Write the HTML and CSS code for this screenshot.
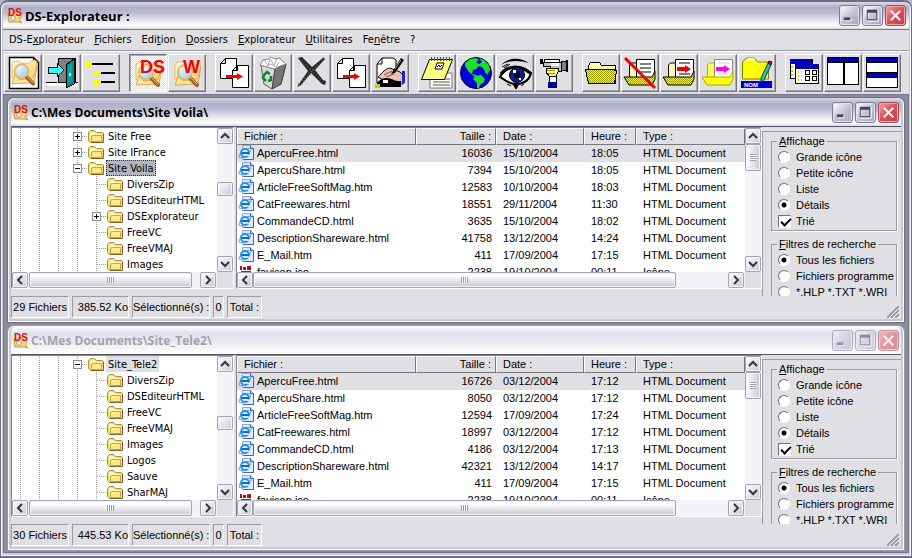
FILE: index.html
```html
<!DOCTYPE html>
<html lang="fr">
<head>
<meta charset="utf-8">
<title>DS-Explorateur</title>
<link rel="stylesheet" href="styles.css">
</head>
<body>
<svg class="defs" aria-hidden="true">
  <defs>
    <linearGradient id="gold" x1="0" y1="0" x2="1" y2="1"><stop offset="0" stop-color="#fffbd0"/><stop offset="1" stop-color="#f4cd62"/></linearGradient>
    <linearGradient id="lens" x1="0" y1="0" x2="1" y2="1"><stop offset="0" stop-color="#fff"/><stop offset="1" stop-color="#8ccdf2"/></linearGradient>
    <pattern id="dither" width="2" height="2" patternUnits="userSpaceOnUse"><rect width="2" height="2" fill="#f0f040"/><rect width="1" height="1" fill="#a0a000"/><rect x="1" y="1" width="1" height="1" fill="#a0a000"/></pattern>
    <symbol id="search" viewBox="0 0 32 32">
      <path d="M4 8l2-3h6l2 2h7l5-3 4 1-3 19-19 2-4-4z" fill="url(#gold)" stroke="#e8bd62"/>
      <path d="M4 28l3-9 5 5 14-2 4-12-3 17z" fill="#fae5a0" stroke="#dca94a"/>
      <path d="M19 21l7 7" stroke="#a8602c" stroke-width="4" stroke-linecap="round"/>
      <path d="M19 20l7 7" stroke="#f0bd80" stroke-width="1"/>
      <circle cx="14" cy="15" r="6.500" fill="url(#lens)" stroke="#e0c9a8" stroke-width="2"/>
      <circle cx="14" cy="15" r="7.500" fill="none" stroke="#c89a5c" stroke-width=".7"/>
    </symbol>
    <symbol id="ds-small" viewBox="0 0 16 16">
      <path d="M1 5h4l1-1h7v9l2 2-3-1H2z" fill="#f6dc7c" stroke="#c9973a"/>
      <circle cx="6" cy="10" r="2.500" fill="#d8eefa" stroke="#c0a070"/>
      <text x="1" y="8" class="ds-mini">DS</text>
    </symbol>
    <symbol id="folder" viewBox="0 0 16 16">
      <path d="M.5 12.500v-8l2-2h4l2 2h6l1 1v8l-1 1h-12z" fill="#f7dd6c" stroke="#b5902f"/>
      <path d="M2 6l1-2h3l2 2h5v1H3l-1 4z" fill="#fff8c0"/>
      <path d="M3.500 13.500v-5l2-1h8v6z" fill="#ffe98a" stroke="#cfa338"/>
      <path d="M3 14.500h12.500V6" fill="none" stroke="#7d6320"/>
    </symbol>
    <symbol id="ie" viewBox="0 0 16 16">
      <path d="M4.500.5h8l3 3v11h-11z" fill="#dfeafc" stroke="#8fa6e0"/>
      <path d="M12.500.5v3h3v11h-10" fill="none" stroke="#4560b8"/>
      <ellipse cx="7" cy="8" rx="7" ry="2.500" transform="rotate(-35 7 8)" fill="none" stroke="#56a8e8"/>
      <circle cx="7" cy="8" r="4" fill="#dff3ff" stroke="#2b8fe0" stroke-width="2"/>
      <path d="M4 8h7" stroke="#1668bd" stroke-width="2"/>
      <path d="M9 9.500h4V11H9z" fill="#dfeafc"/>
    </symbol>
    <symbol id="ico-file" viewBox="0 0 16 16">
      <path d="M2 2h2v4H2zM5 3h3v3H5zM9 2h4v4H9zM3 7h10v2H3z" fill="#c01818"/>
      <path d="M3 4h1v2H3zM6 4h1v1H6zM11 3h1v3h-1z" fill="#600"/>
    </symbol>
    <symbol id="copy" viewBox="0 0 32 32">
      <path d="M2.500 6.500l5-5h11v20h-16zM2.500 6.500h5v-5" fill="#fff" stroke="#000"/>
      <path d="M14.500 13.500l5-5h11v22h-16zM14.500 13.500h5v-5" fill="#fff" stroke="#000"/>
      <path d="M8 18h11v-2l6 3.500-6 3.500v-2H8z" fill="#f00"/>
    </symbol>
    <symbol id="grip" viewBox="0 0 12 12">
      <path d="M0 12L12 0M4 12l8-8M8 12l4-4" stroke="#9a9aa4" stroke-width="2"/>
      <path d="M2 12L12 2M6 12l6-6" stroke="#fff"/>
    </symbol>
    <symbol id="up" viewBox="0 0 10 10"><path d="M1 7l4-4 4 4" fill="none" stroke="#333344" stroke-width="2"/></symbol>
    <symbol id="down" viewBox="0 0 10 10"><path d="M1 3l4 4 4-4" fill="none" stroke="#333344" stroke-width="2"/></symbol>
    <symbol id="left" viewBox="0 0 10 10"><path d="M7 1L3 5l4 4" fill="none" stroke="#333344" stroke-width="2"/></symbol>
    <symbol id="right" viewBox="0 0 10 10"><path d="M3 1l4 4-4 4" fill="none" stroke="#333344" stroke-width="2"/></symbol>
    <symbol id="min" viewBox="0 0 20 20"><path d="M5 13h7v3H5z" fill="#fff"/><path d="M4 12h7v3H4z" fill="#44465f"/></symbol>
    <symbol id="max" viewBox="0 0 20 20"><path d="M5 5h11v11H5z" fill="none" stroke="#fff"/><path d="M4 4h11v11H4zM5 7v7h9V7z" fill="#44465f" fill-rule="evenodd"/></symbol>
    <symbol id="close" viewBox="0 0 20 20"><path d="M5 5l10 10M15 5L5 15" stroke="#fff" stroke-width="2"/></symbol>
  </defs>
</svg>

<div class="app">
  <header class="titlebar">
    <svg class="ic16"><use href="#ds-small"/></svg>
    <h1>DS-Explorateur :</h1>
    <button class="cap" aria-label="Réduire"><svg><use href="#min"/></svg></button>
    <button class="cap" aria-label="Agrandir"><svg><use href="#max"/></svg></button>
    <button class="cap close" aria-label="Fermer"><svg><use href="#close"/></svg></button>
  </header>

  <nav class="menu">
    <button>DS-E<u>x</u>plorateur</button>
    <button><u>F</u>ichiers</button>
    <button>Edi<u>t</u>ion</button>
    <button><u>D</u>ossiers</button>
    <button><u>E</u>xplorateur</button>
    <button><u>U</u>tilitaires</button>
    <button>Fe<u>n</u>être</button>
    <button>?</button>
  </nav>

  <div class="toolbar">
    <div class="group">
      <button aria-label="Aperçu"><svg viewBox="0 0 32 32"><path d="M2.500.5h24l5 5v26h-29z" fill="#fff" stroke="#000" stroke-width="1.500"/><path d="M26.500.5v5h5" fill="none" stroke="#000"/><use href="#search" x="1" y="-1" width="31" height="32"/></svg></button>
      <button aria-label="Quitter"><svg viewBox="0 0 32 32" shape-rendering="crispEdges"><path d="M0 25h32v4H0z" fill="#fff"/><path d="M0 25h11v1H0zM28 25h4v1h-4z" fill="#000"/><path d="M12 1h17v24H12z" fill="#808080" stroke="#000"/><path d="M20 8l8-6v25l-8 4z" fill="#008c8c" stroke="#000"/><path d="M22 9l4-3v18l-4 2z" fill="#00a8a8"/><path d="M23 16h2v3h-2z" fill="#ff0"/><path d="M2 10h9V6l7 7-7 7v-4H2z" fill="#3ff" stroke="#000"/></svg></button>
      <button aria-label="Arborescence"><svg viewBox="0 0 32 32" shape-rendering="crispEdges"><path d="M1 5h5v5H1zM9 14h6v5H9zM9 23h6v5H9z" fill="#ff0"/><path d="M7 6h21v2H7zM16 15h14v2H16zM16 24h14v2H16z" fill="#000"/></svg></button>
    </div>
    <div class="group">
      <button class="pressed" aria-label="DS"><svg viewBox="0 0 32 32"><use href="#search" width="32" height="32"/><text x="8" y="16" class="ds-big">DS</text></svg></button>
      <button aria-label="Windows"><svg viewBox="0 0 32 32"><use href="#search" width="32" height="32"/><text x="12" y="16" class="ds-big">W</text></svg></button>
    </div>
    <div class="group">
      <button aria-label="Copier"><svg><use href="#copy"/></svg></button>
      <button aria-label="Corbeille"><svg viewBox="0 0 32 32"><path d="M4 8l14 4 11-5-5 20-9 5-8-5z" fill="#a8a8a8" stroke="#555"/><path d="M4 8l14 4-3 20-8-5z" fill="#d9d9d9" stroke="#777"/><path d="M18 12l11-5-5 20-9 5z" fill="#777" stroke="#444"/><path d="M3 8l3-5 5-1 3-2 4 2 5-1 2 3 4 3-8 3-3 2-8-2z" fill="#fff" stroke="#888"/><path d="M7 3l4 5 2-6 4 6 3-6M10 9l4-2 5 3 3-5" fill="none" stroke="#aaa"/><path d="M7 18l3-3 3 2M14 19v4l-3 1M9 24l-3-3 1-3" fill="none" stroke="#078a28" stroke-width="2.500"/></svg></button>
      <button aria-label="Supprimer"><svg viewBox="0 0 32 32"><path d="M2 1l4-1 10 10L27 1l2 1-10 11 8 10 3 1-1 4-3-1-11-11L5 28l-4 2 11-16z" fill="#222"/><path d="M3 1l26 26M28 1L2 29" stroke="#555" stroke-dasharray="1 2" stroke-width="3"/></svg></button>
      <button aria-label="Déplacer"><svg><use href="#copy"/></svg></button>
      <button aria-label="Renommer"><svg viewBox="0 0 32 32"><path d="M3 7l5-6h11l3 2v20L3 26z" fill="#fff" stroke="#000"/><path d="M3 7h5V1" fill="none" stroke="#000"/><path d="M4 20c4-4 8-9 12-9l10 4 3 3v9l-14-1z" fill="#eebfb5" stroke="#000"/><path d="M27 1l3 2-9 13-4 1z" fill="#000"/><path d="M27 3l-6 9" stroke="#b8a850"/><path d="M10 18l8-4M12 20l8-3" stroke="#805050"/><path d="M2 29c2-6 6-8 11-8 5 0 8 4 14 3v6H4z" fill="#000"/><path d="M9 23h5v3H9z" fill="#fff"/><path d="M28 14h3v12h-3z" fill="#22c"/><path d="M1 27h5v4H1z" fill="#cc0"/></svg></button>
    </div>
    <div class="group">
      <button aria-label="Bloc-notes"><svg viewBox="0 0 32 32"><path d="M9 16h22v15H9z" fill="#fff" stroke="#777"/><path d="M12 22h17M12 25h17M12 28h17" stroke="#555"/><path d="M8.500 2.500h23l-8 20H.5z" fill="#ffff80" stroke="#000"/><path d="M16 6h7l-2 6h-7z" fill="#fff" stroke="#000"/><path d="M16 10l2-2 1 2 2-2" stroke="#000" fill="none"/><path d="M10 2h21" stroke="#555" stroke-width="4" stroke-dasharray="1 2"/></svg></button>
      <button aria-label="Internet"><svg viewBox="0 0 32 32"><circle cx="16" cy="16" r="15.500" fill="#0000d8" stroke="#000"/><path d="M5 6l5-4 6-1 3 2-3 2 4 3-4 4-3 1-1 4 4 1 2 3-3-1-6-5-4-6zM19 1l5 2 5 5 1 5-3 5-4-7-5-3 4-3zM15 19l6-1 4 4-1 3-4 3-1 3h-2v-5l-4-4z" fill="#1be02a"/></svg></button>
      <button aria-label="Visualiser"><svg viewBox="0 0 32 32"><path d="M2 8C8 1 20-1 30 6 20 3 10 3 2 8z" fill="#000"/><path d="M1 20C5 11 20 6 30 15l2 1c-2 8-8 11-15 11C9 27 5 22 1 20z" fill="#fff" stroke="#000" stroke-width="2"/><path d="M2 17C8 9 20 7 31 16" fill="none" stroke="#000" stroke-width="3"/><circle cx="18" cy="18" r="7.500" fill="#0d1a90" stroke="#000"/><circle cx="18" cy="18" r="3" fill="#000"/><path d="M14 13h3v3h-3zM20 21h2v2h-2z" fill="#fff"/><path d="M3 10l6-3M5 11l6-4M14 27l3 5 3-5zM8 27l4 2M25 27l-3 2" stroke="#000"/></svg></button>
      <button aria-label="Vidéo"><svg viewBox="0 0 32 32" shape-rendering="crispEdges"><path d="M5 5h18v9H12V9H5z" fill="#c0c0c0" stroke="#000"/><path d="M6 2h15v3H6z" fill="#fff" stroke="#000"/><path d="M23 5l5-1v10l-5-1z" fill="#808080" stroke="#000"/><path d="M2 2h3v5H2zM28 3h2v12h-2z" fill="#000"/><path d="M13 6h8v3h-8z" fill="#fff"/><path d="M8 11h12v4l-2 4h-7l-3-4z" fill="#ffff80" stroke="#000"/><path d="M9 13h8M10 16h7" stroke="#a89000"/><path d="M11 19h7v6h-7z" fill="#fff" stroke="#000"/><path d="M10 25h9v6h-9z" fill="#000090"/></svg></button>
    </div>
    <div class="group">
      <button aria-label="Ouvrir dossier"><svg viewBox="0 0 32 32" shape-rendering="crispEdges"><path d="M3.500 26.500v-18l2-3h9l2 3h14v18z" fill="#ffffa8" stroke="#000"/><path d="M.5 12.500h27l4 1-2 13h-26z" fill="url(#dither)" stroke="#000"/></svg></button>
      <button aria-label="Supprimer dossier"><svg viewBox="0 0 32 32"><path d="M5.500 20V8l2-2h7v14" fill="#ffffb0" stroke="#000"/><path d="M12.500 2.500h18v19h-18z" fill="#fff" stroke="#000"/><path d="M16 7h11M16 11h11M16 15h11" stroke="#000"/><path d="M0 20h28l3-6v8l-3 6H5z" fill="url(#dither)" stroke="#000"/><path d="M1 1l30 30" stroke="#f00000" stroke-width="3"/></svg></button>
      <button aria-label="Copier dossier"><svg viewBox="0 0 32 32"><path d="M5.500 20V8l2-2h7v14" fill="#ffffb0" stroke="#000"/><path d="M12.500 2.500h18v19h-18z" fill="#fff" stroke="#000"/><path d="M16 6h11M16 17h11" stroke="#000"/><path d="M14 10h8V8l6 4-6 4v-2h-8z" fill="#f00000"/><path d="M0 20h28l3-6v8l-3 6H5z" fill="url(#dither)" stroke="#000"/></svg></button>
      <button aria-label="Déplacer dossier"><svg viewBox="0 0 32 32"><path d="M5.500 20V8l2-2h7v14" fill="#ffff50" stroke="#b0b000"/><path d="M12.500 2.500h18v19h-18z" fill="#fff" stroke="#888"/><path d="M16 6h11M16 17h11" stroke="#ccc"/><path d="M14 10h8V8l6 4-6 4v-2h-8z" fill="#f0f"/><path d="M0 20h28l3-6v8l-3 6H5z" fill="#ff0" stroke="#a8a800"/></svg></button>
      <button aria-label="Renommer dossier"><svg viewBox="0 0 32 32"><path d="M1.500 22V5l4-4h8l3 4h11v17z" fill="#ff0" stroke="#808000"/><path d="M5 4l2-3h6l2 3z" fill="#ffffa0"/><path d="M0 24h31v7H0z" fill="#0000c8"/><text x="3" y="30" class="nom">NOM</text><path d="M27 6l3 2-7 15-3 2v-4z" fill="#38b8b0" stroke="#004848"/><path d="M27 6l1-2 3 1-1 3z" fill="#b01818" stroke="#500"/></svg></button>
    </div>
    <div class="group">
      <button aria-label="Cascade"><svg viewBox="0 0 32 32" shape-rendering="crispEdges"><path d="M2 2h22v19H2z" fill="#fff" stroke="#000"/><path d="M2 2h22v5H2z" fill="#0000b8"/><path d="M7 7h23v19H7z" fill="#fff" stroke="#000"/><path d="M7 7h23v5H7z" fill="#0000b8"/><path d="M4 9v10" stroke="#cc0" stroke-dasharray="2 2" stroke-width="2"/><path d="M10 14v10M13 14v10" stroke="#cc0" stroke-dasharray="2 2"/><path d="M17 13h4v4h-4zM24 13h4v4h-4zM17 19h4v4h-4zM24 19h4v4h-4z" fill="none" stroke="#000"/></svg></button>
      <button aria-label="Mosaïque verticale"><svg viewBox="0 0 32 32" shape-rendering="crispEdges"><path d="M0 0h32v28H0z" fill="#000"/><path d="M1 1h15v4H1zM18 1h13v4H18z" fill="#0000b8"/><path d="M1 6h15v21H1zM18 6h13v21H18z" fill="#fff"/></svg></button>
      <button aria-label="Mosaïque horizontale"><svg viewBox="0 0 32 32" shape-rendering="crispEdges"><path d="M0 0h32v31H0z" fill="#000"/><path d="M1 1h30v4H1zM1 16h30v4H1z" fill="#0000b8"/><path d="M1 6h30v9H1zM1 21h30v9H1z" fill="#fff"/></svg></button>
    </div>
  </div>

  <main class="mdi">
    <section class="child">
      <header class="titlebar">
        <svg class="ic16"><use href="#ds-small"/></svg>
        <h2>C:\Mes Documents\Site Voila\</h2>
        <button class="cap" aria-label="Réduire"><svg><use href="#min"/></svg></button>
        <button class="cap" aria-label="Agrandir"><svg><use href="#max"/></svg></button>
        <button class="cap close" aria-label="Fermer"><svg><use href="#close"/></svg></button>
      </header>
      <div class="body">
        <div class="pane tree-pane">
          <ul class="tree">
            <li><i></i><i></i><i></i><i class="arm"><b class="box plus"></b></i><svg class="ic16"><use href="#folder"/></svg><span>Site Free</span></li>
            <li><i></i><i></i><i></i><i class="arm"><b class="box plus"></b></i><svg class="ic16"><use href="#folder"/></svg><span>Site IFrance</span></li>
            <li><i></i><i></i><i></i><i class="arm"><b class="box"></b></i><svg class="ic16"><use href="#folder"/></svg><span class="selected">Site Voila</span></li>
            <li><i></i><i></i><i></i><i></i><i class="arm"></i><svg class="ic16"><use href="#folder"/></svg><span>DiversZip</span></li>
            <li><i></i><i></i><i></i><i></i><i class="arm"></i><svg class="ic16"><use href="#folder"/></svg><span>DSEditeurHTML</span></li>
            <li><i></i><i></i><i></i><i></i><i class="arm"><b class="box plus"></b></i><svg class="ic16"><use href="#folder"/></svg><span>DSExplorateur</span></li>
            <li><i></i><i></i><i></i><i></i><i class="arm"></i><svg class="ic16"><use href="#folder"/></svg><span>FreeVC</span></li>
            <li><i></i><i></i><i></i><i></i><i class="arm"></i><svg class="ic16"><use href="#folder"/></svg><span>FreeVMAJ</span></li>
            <li><i></i><i></i><i></i><i></i><i class="arm"></i><svg class="ic16"><use href="#folder"/></svg><span>Images</span></li>
          </ul>
          <div class="vbar"><button aria-label="Haut"><svg><use href="#up"/></svg></button><div class="track tree-first"><div class="thumb"></div></div><button aria-label="Bas"><svg><use href="#down"/></svg></button></div>
          <div class="hbar"><button aria-label="Gauche"><svg><use href="#left"/></svg></button><div class="track"><div class="thumb tree-thumb"></div></div><button aria-label="Droite"><svg><use href="#right"/></svg></button></div>
        </div>
        <div class="pane list-pane">
          <div class="list">
            <table>
              <colgroup><col class="c-name"><col class="c-size"><col class="c-date"><col class="c-hour"><col></colgroup>
              <thead><tr><th>Fichier :</th><th class="num">Taille :</th><th>Date :</th><th>Heure :</th><th>Type :</th></tr></thead>
              <tbody>
                <tr class="current"><td><svg class="ic16"><use href="#ie"/></svg>ApercuFree.html</td><td>16036</td><td>15/10/2004</td><td>18:05</td><td>HTML Document</td></tr>
                <tr><td><svg class="ic16"><use href="#ie"/></svg>ApercuShare.html</td><td>7394</td><td>15/10/2004</td><td>18:05</td><td>HTML Document</td></tr>
                <tr><td><svg class="ic16"><use href="#ie"/></svg>ArticleFreeSoftMag.htm</td><td>12583</td><td>10/10/2004</td><td>18:03</td><td>HTML Document</td></tr>
                <tr><td><svg class="ic16"><use href="#ie"/></svg>CatFreewares.html</td><td>18551</td><td>29/11/2004</td><td>11:30</td><td>HTML Document</td></tr>
                <tr><td><svg class="ic16"><use href="#ie"/></svg>CommandeCD.html</td><td>3635</td><td>15/10/2004</td><td>18:02</td><td>HTML Document</td></tr>
                <tr><td><svg class="ic16"><use href="#ie"/></svg>DescriptionShareware.html</td><td>41758</td><td>13/12/2004</td><td>14:24</td><td>HTML Document</td></tr>
                <tr><td><svg class="ic16"><use href="#ie"/></svg>E_Mail.htm</td><td>411</td><td>17/09/2004</td><td>17:15</td><td>HTML Document</td></tr>
                <tr><td><svg class="ic16"><use href="#ico-file"/></svg>favicon.ico</td><td>2238</td><td>19/10/2004</td><td>00:11</td><td>Icône</td></tr>
              </tbody>
            </table>
          </div>
          <div class="vbar"><button aria-label="Haut"><svg><use href="#up"/></svg></button><div class="track"><div class="thumb long"></div></div><button aria-label="Bas"><svg><use href="#down"/></svg></button></div>
          <div class="hbar"><button aria-label="Gauche"><svg><use href="#left"/></svg></button><div class="track"><div class="thumb list-thumb"></div></div><button aria-label="Droite"><svg><use href="#right"/></svg></button></div>
        </div>
        <form class="options">
          <fieldset>
            <legend><u>A</u>ffichage</legend>
            <label><input type="radio" name="view">Grande icône</label>
            <label><input type="radio" name="view">Petite icône</label>
            <label><input type="radio" name="view">Liste</label>
            <label><input type="radio" name="view" checked>Détails</label>
            <label><input type="checkbox" checked>Trié</label>
          </fieldset>
          <fieldset>
            <legend><u>F</u>iltres de recherche</legend>
            <label><input type="radio" name="filter" checked>Tous les fichiers</label>
            <label><input type="radio" name="filter">Fichiers programme</label>
            <label><input type="radio" name="filter">*.HLP *.TXT *.WRI</label>
          </fieldset>
        </form>
      </div>
      <footer class="status">
        <span class="s-count">29 Fichiers</span><span class="s-size">385.52 Ko</span><span class="s-sel">Sélectionné(s) :</span><span class="s-n">0</span><span class="s-total">Total :</span>
        <svg class="grip"><use href="#grip"/></svg>
      </footer>
    </section>

    <section class="child inactive">
      <header class="titlebar">
        <svg class="ic16"><use href="#ds-small"/></svg>
        <h2>C:\Mes Documents\Site_Tele2\</h2>
        <button class="cap" aria-label="Réduire"><svg><use href="#min"/></svg></button>
        <button class="cap" aria-label="Agrandir"><svg><use href="#max"/></svg></button>
        <button class="cap close" aria-label="Fermer"><svg><use href="#close"/></svg></button>
      </header>
      <div class="body">
        <div class="pane tree-pane">
          <ul class="tree">
            <li><i></i><i></i><i></i><i class="arm"><b class="box"></b></i><svg class="ic16"><use href="#folder"/></svg><span class="selected">Site_Tele2</span></li>
            <li><i></i><i></i><i></i><i></i><i class="arm"></i><svg class="ic16"><use href="#folder"/></svg><span>DiversZip</span></li>
            <li><i></i><i></i><i></i><i></i><i class="arm"></i><svg class="ic16"><use href="#folder"/></svg><span>DSEditeurHTML</span></li>
            <li><i></i><i></i><i></i><i></i><i class="arm"></i><svg class="ic16"><use href="#folder"/></svg><span>FreeVC</span></li>
            <li><i></i><i></i><i></i><i></i><i class="arm"></i><svg class="ic16"><use href="#folder"/></svg><span>FreeVMAJ</span></li>
            <li><i></i><i></i><i></i><i></i><i class="arm"></i><svg class="ic16"><use href="#folder"/></svg><span>Images</span></li>
            <li><i></i><i></i><i></i><i></i><i class="arm"></i><svg class="ic16"><use href="#folder"/></svg><span>Logos</span></li>
            <li><i></i><i></i><i></i><i></i><i class="arm"></i><svg class="ic16"><use href="#folder"/></svg><span>Sauve</span></li>
            <li><i></i><i></i><i></i><i></i><i class="arm"></i><svg class="ic16"><use href="#folder"/></svg><span>SharMAJ</span></li>
          </ul>
          <div class="vbar"><button aria-label="Haut"><svg><use href="#up"/></svg></button><div class="track tree-second"><div class="thumb"></div></div><button aria-label="Bas"><svg><use href="#down"/></svg></button></div>
          <div class="hbar"><button aria-label="Gauche"><svg><use href="#left"/></svg></button><div class="track"><div class="thumb tree-thumb"></div></div><button aria-label="Droite"><svg><use href="#right"/></svg></button></div>
        </div>
        <div class="pane list-pane">
          <div class="list">
            <table>
              <colgroup><col class="c-name"><col class="c-size"><col class="c-date"><col class="c-hour"><col></colgroup>
              <thead><tr><th>Fichier :</th><th class="num">Taille :</th><th>Date :</th><th>Heure :</th><th>Type :</th></tr></thead>
              <tbody>
                <tr class="current"><td><svg class="ic16"><use href="#ie"/></svg>ApercuFree.html</td><td>16726</td><td>03/12/2004</td><td>17:12</td><td>HTML Document</td></tr>
                <tr><td><svg class="ic16"><use href="#ie"/></svg>ApercuShare.html</td><td>8050</td><td>03/12/2004</td><td>17:12</td><td>HTML Document</td></tr>
                <tr><td><svg class="ic16"><use href="#ie"/></svg>ArticleFreeSoftMag.htm</td><td>12594</td><td>17/09/2004</td><td>17:24</td><td>HTML Document</td></tr>
                <tr><td><svg class="ic16"><use href="#ie"/></svg>CatFreewares.html</td><td>18997</td><td>03/12/2004</td><td>17:12</td><td>HTML Document</td></tr>
                <tr><td><svg class="ic16"><use href="#ie"/></svg>CommandeCD.html</td><td>4186</td><td>03/12/2004</td><td>17:13</td><td>HTML Document</td></tr>
                <tr><td><svg class="ic16"><use href="#ie"/></svg>DescriptionShareware.html</td><td>42321</td><td>13/12/2004</td><td>14:17</td><td>HTML Document</td></tr>
                <tr><td><svg class="ic16"><use href="#ie"/></svg>E_Mail.htm</td><td>411</td><td>17/09/2004</td><td>17:15</td><td>HTML Document</td></tr>
                <tr><td><svg class="ic16"><use href="#ico-file"/></svg>favicon.ico</td><td>2238</td><td>19/10/2004</td><td>00:11</td><td>Icône</td></tr>
              </tbody>
            </table>
          </div>
          <div class="vbar"><button aria-label="Haut"><svg><use href="#up"/></svg></button><div class="track"><div class="thumb long"></div></div><button aria-label="Bas"><svg><use href="#down"/></svg></button></div>
          <div class="hbar"><button aria-label="Gauche"><svg><use href="#left"/></svg></button><div class="track"><div class="thumb list-thumb"></div></div><button aria-label="Droite"><svg><use href="#right"/></svg></button></div>
        </div>
        <form class="options">
          <fieldset>
            <legend><u>A</u>ffichage</legend>
            <label><input type="radio" name="view">Grande icône</label>
            <label><input type="radio" name="view">Petite icône</label>
            <label><input type="radio" name="view">Liste</label>
            <label><input type="radio" name="view" checked>Détails</label>
            <label><input type="checkbox" checked>Trié</label>
          </fieldset>
          <fieldset>
            <legend><u>F</u>iltres de recherche</legend>
            <label><input type="radio" name="filter" checked>Tous les fichiers</label>
            <label><input type="radio" name="filter">Fichiers programme</label>
            <label><input type="radio" name="filter">*.HLP *.TXT *.WRI</label>
          </fieldset>
        </form>
      </div>
      <footer class="status">
        <span class="s-count">30 Fichiers</span><span class="s-size">445.53 Ko</span><span class="s-sel">Sélectionné(s) :</span><span class="s-n">0</span><span class="s-total">Total :</span>
        <svg class="grip"><use href="#grip"/></svg>
      </footer>
    </section>
  </main>
</div>
</body>
</html>
```
FILE: styles.css
```css
:root {
  --face: #e0dfe3;
  --shadow: #9d9da1;
  --ui: "DejaVu Sans Condensed", "Noto Sans", sans-serif;
  --sans: "Liberation Sans", Arial, sans-serif;
}
* { box-sizing: border-box; }
body {
  margin: 0;
  background: #b9b9c6;
  font: 11px/16px var(--sans);
  color: #000;
}
button { font: inherit; color: inherit; padding: 0; margin: 0; border: 0; background: none; }
svg { display: block; flex: none; }
.defs { position: absolute; width: 0; height: 0; }
.ic16 { width: 16px; height: 16px; }
.ds-mini { font: bold 10px var(--sans); fill: #d8101c; }
.ds-big { font: bold 18px var(--sans); fill: #f00010; }
.nom { font: bold 6px var(--sans); fill: #fff; }

.app {
  display: flex;
  flex-direction: column;
  min-height: 100vh;
  padding: 0 2px 3px;
  background: #c9c9d8;
  border: 1px solid #6d6e86;
  border-width: 2px 1px;
  border-radius: 8px 8px 0 0;
  box-shadow: inset 0 0 0 1px #f8f8fc;
}

/* Title bars */
.titlebar {
  display: flex;
  align-items: center;
  gap: 2px;
  height: 27px;
  padding: 0 3px 0 4px;
  background: linear-gradient(#d8d8e6 0, #b0b0c8 20%, #b8b8ce 38%, #e4e4ee 66%, #fff 88%, #d8d8e2 100%);
  border-radius: 6px 6px 0 0;
}
.titlebar h1, .titlebar h2 {
  flex: 1;
  margin: 0;
  font: bold 13px/20px "Open Sans", sans-serif;
  white-space: nowrap;
}
.titlebar h2 { font-size: 12px; }
.cap {
  width: 21px;
  height: 21px;
  border: 1px solid #7c7c98;
  border-radius: 3px;
  background: linear-gradient(135deg, #fff, #c4c4d6 50%, #a4a4bc);
  box-shadow: inset 0 0 0 1px #e4e4f0;
}
.cap svg { width: 19px; height: 19px; }
.cap.close { border-color: #a05060; background: linear-gradient(135deg, #f0a0a0, #d8505a 50%, #c83a48); box-shadow: inset 0 0 0 1px #eba4a8; }

/* Menu */
.menu {
  display: flex;
  gap: 10px;
  height: 21px;
  padding: 0 6px;
  border-top: 1px solid #76768a;
  background: var(--face);
  font: 11px/18px var(--ui);
}

/* Toolbar */
.toolbar {
  display: flex;
  gap: 8px;
  padding: 3px 1px 2px;
  border-top: 1px solid #9a9aa6;
  box-shadow: inset 0 1px #fff;
  background: var(--face);
}
.toolbar .group { display: flex; gap: 1px; padding-right: 1px; }
.toolbar button {
  width: 38px;
  height: 38px;
  padding: 2px;
  border: 1px solid;
  border-color: #fff #77777b #77777b #fff;
  background: var(--face);
  box-shadow: inset -1px -1px #aaaaae;
}
.toolbar button.pressed {
  border-color: #77777b #fff #fff #77777b;
  box-shadow: inset 1px 1px #aaaaae;
  background: repeating-conic-gradient(#fff 0 25%, #e0dfe3 0 50%) 0 0 / 2px 2px;
}
.toolbar svg { width: 32px; height: 32px; overflow: visible; }

/* Child windows */
.mdi {
  flex: 1;
  display: flex;
  flex-direction: column;
  gap: 2px;
  padding: 2px 3px 0;
  border: 1px solid #77778a;
  background: #8c8c98;
}
.child {
  padding: 0 3px 3px;
  border: 1px solid #6d6e86;
  border-radius: 7px 7px 0 0;
  background: #c9c9d8;
  box-shadow: inset 0 0 0 1px #fff;
}
.child .titlebar { height: 28px; padding: 1px 2px 0 2px; }
.child.inactive { border-color: #9a9aac; }
.inactive .titlebar { background: linear-gradient(#fff, #e0e0ec 25%, #ebebf2 60%, #fff); }
.inactive h2 { color: #a2a2a8; }
.inactive .cap { opacity: .55; }

.body {
  display: flex;
  align-items: flex-start;
  height: 170px;
  border-top: 1px solid #55556a;
  background: var(--face);
}
.pane {
  display: grid;
  grid-template-columns: 1fr 16px;
  grid-template-rows: 144px 16px;
  border: 1px solid #84848a;
  border-color: #84848a #fff #fff #84848a;
  background: var(--face);
}
.tree-pane { width: 223px; margin-right: 2px; }
.list-pane { flex: 1; min-width: 0; }

.tree { margin: 0; padding: 0; list-style: none; overflow: hidden; background: #fff; font: 11px/17px var(--ui); }
.tree li { display: flex; height: 16px; }
.tree i {
  flex: none;
  width: 19px;
  height: 16px;
  background: repeating-linear-gradient(#a0a0a0 0 1px, transparent 1px 2px) 8px 0 / 1px 100% no-repeat;
}
.tree i.arm {
  display: flex;
  align-items: center;
  padding-left: 4px;
  background:
    repeating-linear-gradient(#a0a0a0 0 1px, transparent 1px 2px) 8px 0 / 1px 100% no-repeat,
    repeating-linear-gradient(90deg, #a0a0a0 0 1px, transparent 1px 2px) 9px 8px / 10px 1px no-repeat;
}
.box {
  width: 9px;
  height: 9px;
  border: 1px solid #8a8a96;
  background: linear-gradient(#000, #000) 1px 3px / 5px 1px no-repeat, #fff;
}
.box.plus { background: linear-gradient(#000, #000) 1px 3px / 5px 1px no-repeat, linear-gradient(#000, #000) 3px 1px / 1px 5px no-repeat, #fff; }
.tree span { margin-left: 2px; padding: 0 2px; white-space: nowrap; }
.tree .selected { background: #b2b4bf; outline: 1px dotted #333; outline-offset: -1px; }
.inactive .tree .selected { background: var(--face); outline: 0; }

/* Scroll bars */
.vbar, .hbar { display: flex; background: #f4f3f8; }
.vbar { flex-direction: column; }
.hbar { padding-right: 1px; }
.vbar .track, .hbar .track { flex: 1; display: flex; }
.vbar .track { flex-direction: column; }
.pane .hbar { grid-column: 1; }
.vbar button, .hbar button, .thumb {
  width: 16px;
  height: 16px;
  border: 1px solid #a2a2b4;
  border-radius: 2px;
  background: linear-gradient(135deg, #fff, #c8c8d6);
  box-shadow: inset 0 0 0 1px #f4f4fa;
}
.vbar button svg, .hbar button svg { width: 10px; height: 10px; margin: 2px; }
.thumb { height: 14px; }
.thumb.long { height: 27px; background: repeating-linear-gradient(#9c9cb0 0 1px, #fff 1px 2px) 4px 9px / 6px 7px no-repeat, linear-gradient(90deg, #fff, #c8c8d6); }
.hbar .thumb { height: 16px; background: repeating-linear-gradient(90deg, #9c9cb0 0 1px, #fff 1px 2px) center / 7px 6px no-repeat, linear-gradient(#fff 20%, #c8c8d6); }
.hbar .tree-thumb { width: 95%; margin-left: 1px; }
.hbar .list-thumb { width: 89%; }
.tree-first { padding-top: 38px; }
.tree-second { padding-top: 44px; }

/* File list */
.list { overflow: hidden; background: #fff; }
table { width: 100%; border-collapse: separate; border-spacing: 0; table-layout: fixed; }
.c-name { width: 179px; }
.c-size { width: 80px; }
.c-date { width: 88px; }
.c-hour { width: 52px; }
th {
  height: 17px;
  padding: 0 4px 0 6px;
  border: 1px solid;
  border-color: #fff #77777b #77777b #fff;
  background: var(--face);
  font-weight: normal;
  line-height: 15px;
  text-align: left;
  white-space: nowrap;
}
td { height: 17px; padding: 0 4px 0 7px; line-height: 17px; white-space: nowrap; }
td:first-child { display: flex; gap: 3px; padding: 0 0 0 1px; }
td:nth-child(2), th.num { text-align: right; }
.current td { background: var(--face); }

/* Options */
.options {
  width: 139px;
  height: 165px;
  margin: 4px 0 0;
  padding: 1px 4px 0 8px;
  overflow: hidden;
  border-top: 1px solid var(--shadow);
  border-left: 1px solid var(--shadow);
}
fieldset {
  min-width: 0;
  margin: 0 0 5px;
  padding: 0 0 1px 6px;
  border: 1px solid var(--shadow);
  box-shadow: 1px 1px #fff;
}
legend { margin-left: -1px; padding: 0 2px; line-height: 16px; }
fieldset label { display: flex; align-items: center; gap: 5px; height: 16px; white-space: nowrap; }
fieldset input {
  appearance: none;
  flex: none;
  width: 13px;
  height: 13px;
  margin: 0;
  border: 1px solid;
  border-color: #707074 #fff #fff #707074;
  background: #fff;
}
fieldset input[type="radio"] { width: 12px; height: 12px; margin-right: 1px; border-radius: 50%; }
input[type="radio"]:checked { background: radial-gradient(circle, #000 0 2px, #fff 3px); }
input[type="checkbox"]:checked::before {
  content: "";
  display: block;
  width: 8px;
  height: 4px;
  margin: 2px 0 0 2px;
  border: solid #000;
  border-width: 0 0 2px 2px;
  transform: rotate(-45deg);
}

/* Status bar */
.status {
  display: flex;
  align-items: flex-end;
  gap: 3px;
  background: var(--face);
}
.status span {
  height: 22px;
  margin-bottom: 1px;
  border: 1px solid;
  border-color: var(--shadow) #fff #fff var(--shadow);
  line-height: 20px;
  text-align: center;
  white-space: nowrap;
}
.s-count { width: 58px; }
.s-size { width: 57px; }
.status .s-size { text-align: right; }
.s-sel { width: 78px; }
.s-n { width: 11px; }
.s-total { width: 35px; }
.grip { width: 12px; height: 12px; margin: 0 2px 1px auto; }
```
